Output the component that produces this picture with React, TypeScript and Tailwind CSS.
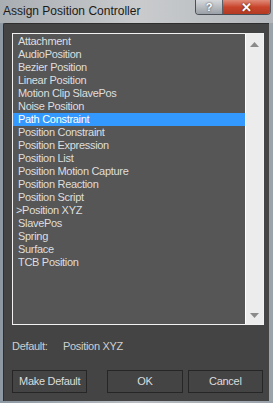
const controllers = [
  "Attachment",
  "AudioPosition",
  "Bezier Position",
  "Linear Position",
  "Motion Clip SlavePos",
  "Noise Position",
  "Path Constraint",
  "Position Constraint",
  "Position Expression",
  "Position List",
  "Position Motion Capture",
  "Position Reaction",
  "Position Script",
  ">Position XYZ",
  "SlavePos",
  "Spring",
  "Surface",
  "TCB Position",
];

const selected = 6;

export default function App() {
  return (
    <div
      className="w-[273px] h-[403px] flex flex-col bg-gradient-to-r from-[#8d98a3] via-[#b9bdc1] to-[#9aa2aa] overflow-hidden"
      style={{ fontFamily: '"Liberation Sans", Arial, sans-serif' }}
    >
      {/* title bar */}
      <div className="h-[23px] flex items-start relative bg-gradient-to-r from-[#a9aeb3] via-[#c9cbcd] to-[#b4b8bc]">
        <span className="pl-[3px] pt-[4px] text-[12px] leading-[14px] text-[#1b1b1b]">
          Assign Position Controller
        </span>
        <div className="ml-auto mr-[2px] flex h-[15px] rounded-b-[4px] border border-t-0 border-[#4a5058] overflow-hidden">
          <div className="w-[27px] flex items-center justify-center bg-gradient-to-b from-[#d6d9dc] to-[#9aa0a6] border-r border-[#5a6068] text-white text-[11px] font-bold leading-none [text-shadow:0_0_2px_#333]">
            ?
          </div>
          <div className="w-[47px] flex items-center justify-center bg-gradient-to-b from-[#e08a78] via-[#c8452c] to-[#b43a22] text-white text-[13px] font-bold leading-none [text-shadow:0_0_2px_#421]">
            ✕
          </div>
        </div>
      </div>

      {/* client */}
      <div className="flex-1 ml-[3px] mr-[4px] mb-[2px] bg-[#444444] border-t border-l border-[#2e2e2e] flex flex-col pl-[8px] pr-[6px] pt-[9px] rounded-tl-[2px] tracking-[-0.3px]">
        <div className="h-[292px] w-[252px] border border-[#f2f2f2] flex bg-[#565656]">
          <div className="flex-1 pt-[1px]">
            {controllers.map((name, i) => (
              <div
                key={name}
                className={`h-[13px] text-[11px] leading-[13px] whitespace-nowrap ${
                  name.startsWith(">") ? "pl-[3px]" : "pl-[5px]"
                } ${i === selected ? "bg-[#3399ff] text-white" : "text-[#dedede]"}`}
              >
                {name}
              </div>
            ))}
          </div>
          <div className="w-[18px] bg-[#ececec] border-l border-[#ffffff] flex flex-col items-center justify-between pt-[8px] pb-[6px]">
            <svg width="9" height="5" viewBox="0 0 9 5">
              <path d="M4.5 0 L9 5 L0 5 Z" fill="#8a8a8a" />
            </svg>
            <svg width="9" height="5" viewBox="0 0 9 5">
              <path d="M0 0 L9 0 L4.5 5 Z" fill="#8a8a8a" />
            </svg>
          </div>
        </div>

        <div className="flex text-[11px] text-[#cfcfcf] mt-[15px] h-[13px] leading-[13px]">
          <span className="w-[51px]">Default:</span>
          <span>Position XYZ</span>
        </div>

        <div className="flex mt-[17px] h-[23px]">
          <button className="w-[76px] h-[23px] bg-[#444444] border border-[#262626] text-[11px] text-[#dcdcdc]">
            Make Default
          </button>
          <button className="ml-[20px] w-[76px] h-[23px] bg-[#444444] border border-[#262626] text-[11px] text-[#dcdcdc]">
            OK
          </button>
          <button className="ml-[5px] w-[76px] h-[23px] bg-[#444444] border border-[#262626] text-[11px] text-[#dcdcdc]">
            Cancel
          </button>
        </div>
      </div>
    </div>
  );
}
